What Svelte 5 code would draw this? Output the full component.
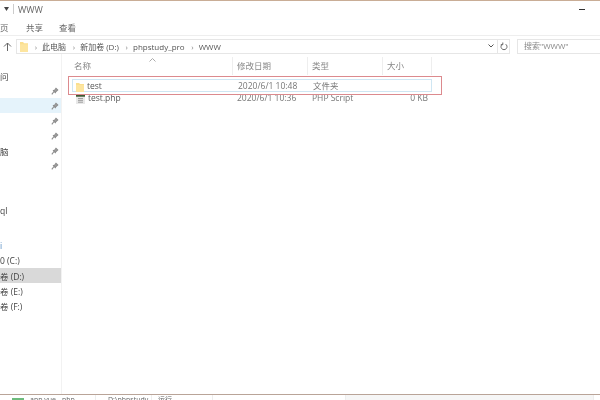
<script>
  const sidebar = [
    { text: "问" },
    { pin: true },
    { pin: true, tone: "active" },
    { pin: true },
    { pin: true },
    { text: "脑", pin: true },
    { pin: true },
    {},
    {},
    { text: "ql" },
    {},
    { text: "i", tone: "link group" },
    { text: "0 (C:)" },
    { text: "卷 (D:)", tone: "current" },
    { text: "卷 (E:)" },
    { text: "卷 (F:)" }
  ];

  const files = [
    { name: "test", date: "2020/6/1 10:48", type: "文件夹", size: "", folder: true },
    { name: "test.php", date: "2020/6/1 10:36", type: "PHP Script", size: "0 KB", folder: false }
  ];
</script>

{#snippet folderIcon(w, h)}
  <svg class="folder" width={w} height={h} viewBox="0 0 9 10" preserveAspectRatio="none">
    <path d="M0 1h3.500l1 1H9v8H0z" fill="#fbdf8f" />
    <path d="M0 3h9v7H0z" fill="#fde59f" />
  </svg>
{/snippet}

{#snippet pinIcon()}
  <svg class="pin" width="8" height="8" viewBox="0 0 8 8">
    <path d="M.8 7.300 3 4.500M2 3.200 4.800 6M3 4l2-2.600 1.700 1.500L4.400 5" stroke="#8d8d8d" stroke-width="1.100" fill="#a5a5a5" />
  </svg>
{/snippet}

<div class="window">
  <div class="titlebar">
    <svg class="caret" width="5" height="4" viewBox="0 0 5 4"><path d="M0 0h5L2.500 4z" fill="#444" /></svg>
    <span class="divider"></span>
    <span class="title">WWW</span>
    <span class="minimize"></span>
  </div>

  <div class="tabs">
    <span class="tab first">页</span>
    <span class="tab">共享</span>
    <span class="tab">查看</span>
  </div>

  <div class="navbar">
    <svg class="up" width="9" height="9" viewBox="0 0 9 9">
      <path d="M4.500 9V1M1 4.500 4.500 1 8 4.500" fill="none" stroke="#666" stroke-width="1" />
    </svg>
    <div class="address">
      {@render folderIcon(8, 11)}
      <span class="chev">›</span><span>此电脑</span>
      <span class="chev">›</span><span>新加卷 (D:)</span>
      <span class="chev">›</span><span>phpstudy_pro</span>
      <span class="chev">›</span><span>WWW</span>
      <svg class="dropdown" width="6" height="4" viewBox="0 0 6 4"><path d="M.5.500 3 3 5.500.500" fill="none" stroke="#555" stroke-width="1" /></svg>
    </div>
    <div class="refresh">
      <svg width="8" height="9" viewBox="0 0 8 9">
        <path d="M2.300 2.200a3 3 0 1 0 3.400 0M2.800.500v2.200H.8" fill="none" stroke="#666" stroke-width="1" />
      </svg>
    </div>
    <div class="search">搜索"WWW"</div>
  </div>

  <div class="content">
    <nav class="sidebar">
      {#each sidebar as row}
        <div class="side-row {row.tone ?? ''}">
          <span>{row.text ?? ""}</span>
          {#if row.pin}{@render pinIcon()}{/if}
        </div>
      {/each}
    </nav>

    <main class="list">
      <svg class="sort" width="7" height="4" viewBox="0 0 7 4"><path d="M.5 3.500 3.500.500l3 3" fill="none" stroke="#aaa" stroke-width="1" /></svg>
      <div class="row head">
        <span class="cell name">名称</span>
        <span class="cell date">修改日期</span>
        <span class="cell type">类型</span>
        <span class="cell size">大小</span>
      </div>
      {#each files as file}
        <div class="row file" class:selected={file.folder}>
          <span class="cell name">
            {#if file.folder}
              {@render folderIcon(8, 10)}
            {:else}
              <svg class="folder" width="9" height="10" viewBox="0 0 9 11" preserveAspectRatio="none">
                <path d="M0 0h9v11H0z" fill="#e8e8e8" />
                <path d="M0 0h9v3H0z" fill="#3e5a32" />
                <path d="M2 5h5M2 7h5M2 9h5" stroke="#999" stroke-width="1" />
              </svg>
            {/if}
            <span class="label">{file.name}</span>
          </span>
          <span class="cell date label">{file.date}</span>
          <span class="cell type label">{file.type}</span>
          <span class="cell size label">{file.size}</span>
        </div>
      {/each}
      <div class="highlight"></div>
    </main>
  </div>

  <div class="taskbar">
    <span class="task one"><i></i>app.vue - php</span>
    <span class="task two">D:\phpstudy</span>
    <span class="task three">运行</span>
    <span class="task four"></span>
    <span class="task five"></span>
  </div>
</div>

<style>
  :global(body) {
    margin: 0;
    background: #fff;
  }

  .window {
    width: 600px;
    height: 400px;
    overflow: hidden;
    display: flex;
    flex-direction: column;
    box-sizing: border-box;
    border-top: 1px solid #c9ad96;
    font-family: "Open Sans", "Noto Sans CJK SC", sans-serif;
    font-size: 8.500px;
    color: #555;
    filter: blur(0.35px);
  }

  .titlebar {
    height: 16px;
    flex: none;
    display: flex;
    align-items: center;
    padding-left: 4px;
    padding-right: 15px;
  }

  .caret {
    margin-right: 4px;
  }

  .divider {
    width: 1px;
    height: 10px;
    background: #ccc;
    margin-right: 4px;
  }

  .title {
    color: #666;
    font-size: 9px;
    flex: 1;
  }

  .minimize {
    width: 6px;
    height: 1px;
    background: #333;
  }

  .tabs {
    height: 16px;
    padding-top: 2px;
    flex: none;
    display: flex;
    align-items: center;
    gap: 18px;
    color: #666;
    border-bottom: 1px solid #eee;
  }

  .tab {
    width: 15px;
    white-space: nowrap;
  }

  .tab.first {
    width: 8px;
  }

  .navbar {
    height: 15px;
    flex: none;
    margin-top: 3px;
    display: flex;
    align-items: stretch;
    font-size: 8px;
  }

  .up {
    margin: 3px 4px 0 3px;
  }

  .address {
    width: 481px;
    display: flex;
    align-items: center;
    gap: 5px;
    padding-left: 3px;
    padding-bottom: 1px;
    box-sizing: border-box;
    border: 1px solid #e6e6e6;
    border-right: 0;
  }

  .address .chev {
    margin: 0 0 0 1.700px;
    color: #888;
  }

  .dropdown {
    margin-left: auto;
    margin-right: 3px;
  }

  .refresh {
    width: 13px;
    display: flex;
    align-items: center;
    justify-content: center;
    box-sizing: border-box;
    border: 1px solid #e6e6e6;
  }

  .search {
    margin-left: 7px;
    flex: 1;
    padding-left: 6px;
    line-height: 12px;
    color: #888;
    border: 1px solid #e6e6e6;
    border-right: 0;
  }

  .content {
    flex: 1;
    display: flex;
    min-height: 0;
    padding-top: 14px;
  }

  .sidebar {
    width: 61px;
    flex: none;
    margin-top: -14px;
    padding-top: 14px;
    border-right: 1px solid #f2f2f2;
    color: #444;
  }

  .side-row {
    height: 15px;
    display: flex;
    align-items: center;
    justify-content: space-between;
    padding-right: 2px;
    box-sizing: border-box;
    white-space: nowrap;
  }

  .side-row.active {
    background: #e5f3fb;
  }

  .side-row.current {
    background: #d9d9d9;
  }

  .side-row.link {
    color: #5b8fc4;
  }

  .side-row.group {
    margin-top: 5px;
  }

  .pin {
    margin-left: auto;
  }

  .list {
    flex: 1;
    position: relative;
    padding-left: 10px;
    margin-top: -12px;
    color: #777;
  }

  .sort {
    position: absolute;
    left: 87px;
    top: 2px;
  }

  .row {
    display: grid;
    grid-template-columns: 161px 75px 75px 49px;
    width: 360px;
    box-sizing: border-box;
    align-items: center;
  }

  .head {
    height: 18px;
    color: #888;
    margin-bottom: 4px;
    margin-top: 1px;
  }

  .head .cell {
    height: 18px;
    line-height: 18px;
    border-right: 1px solid #eee;
    box-sizing: border-box;
  }

  .cell {
    white-space: nowrap;
    padding-left: 4px;
  }

  .label {
    line-height: 11px;
    padding-bottom: 2px;
  }

  .name {
    display: flex;
    align-items: center;
    gap: 3px;
    color: #555;
  }

  .head .name {
    color: #888;
    padding-left: 2px;
  }

  .size {
    text-align: right;
    padding-right: 4px;
  }

  .head .size {
    text-align: left;
  }

  .file {
    height: 13px;
  }

  .selected {
    background: #fff;
    border: 1px solid #cfe6f3;
  }

  .selected .name {
    padding-left: 3px;
  }

  .highlight {
    position: absolute;
    left: 6px;
    top: 20px;
    width: 374px;
    height: 19px;
    box-sizing: border-box;
    border: 1px solid #dc8a8e;
    pointer-events: none;
  }

  .taskbar {
    height: 5px;
    flex: none;
    display: flex;
    overflow: hidden;
    border-top: 1px solid #b9a498;
    font-size: 7px;
    line-height: 9px;
    color: #666;
  }

  .task {
    display: block;
    box-sizing: border-box;
    white-space: nowrap;
    border-right: 1px solid #eee;
  }

  .one {
    width: 96px;
    padding-left: 12px;
  }

  .one i {
    display: inline-block;
    width: 12px;
    height: 4px;
    background: #6dbb7c;
    margin-right: 6px;
  }

  .two {
    width: 56px;
    padding-left: 12px;
  }

  .three {
    width: 61px;
    padding-left: 6px;
    text-decoration: underline;
  }

  .four {
    width: 133px;
  }

  .five {
    width: 248px;
    background: #f6f6f6;
  }
</style>
